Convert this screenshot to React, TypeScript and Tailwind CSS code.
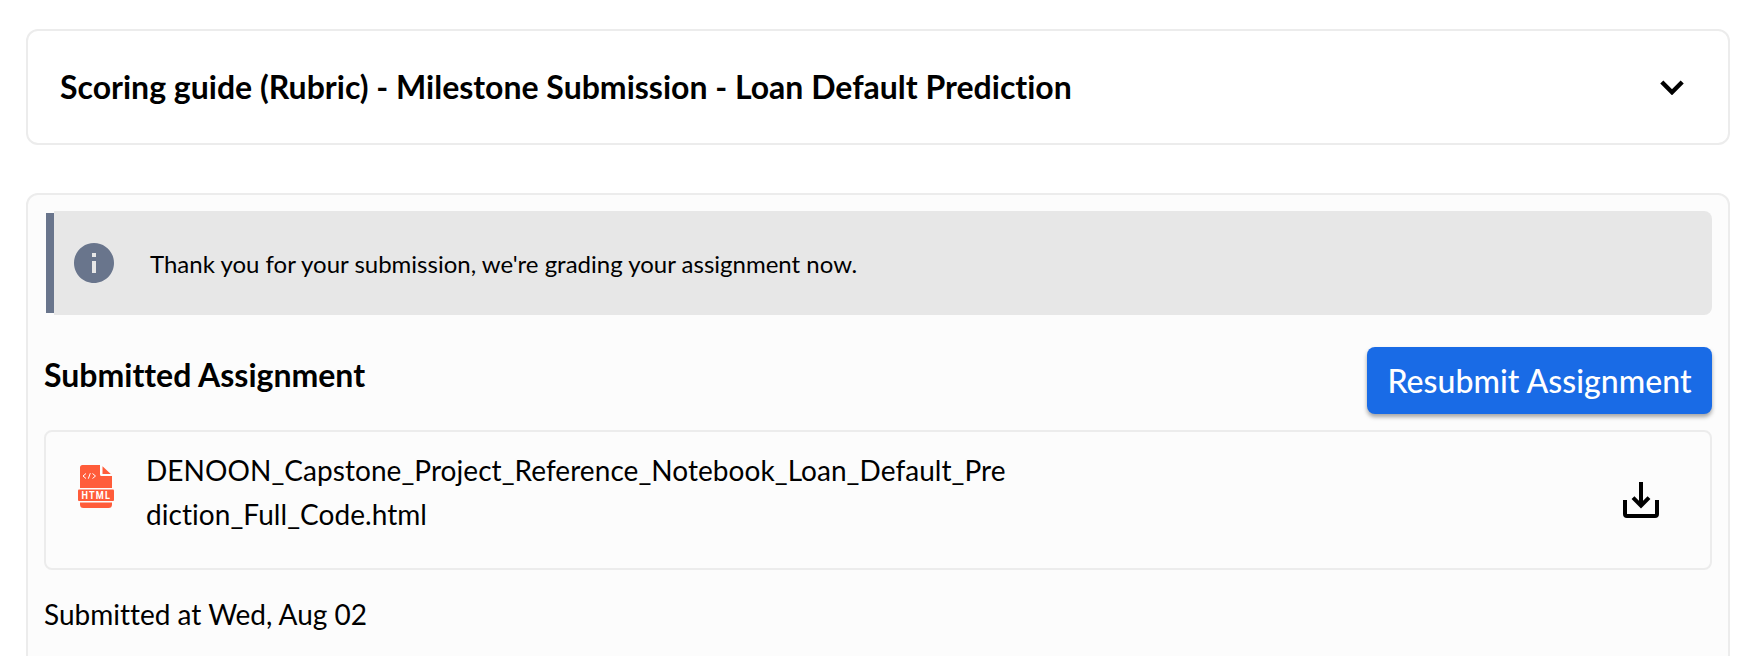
const ChevronDown = () => (
  <svg width="24" height="16" viewBox="0 0 24 16" fill="none">
    <path d="M1.8 3 12 13.2 22.2 3" stroke="#000" strokeWidth="4.4" />
  </svg>
);

const InfoIcon = () => (
  <svg width="48" height="48" viewBox="0 0 24 24" fill="#69758c">
    <path d="M12 2C6.48 2 2 6.48 2 12s4.48 10 10 10 10-4.48 10-10S17.52 2 12 2zm1 15h-2v-6h2v6zm0-8h-2V7h2v2z" />
  </svg>
);

const DownloadIcon = () => (
  <svg width="36" height="36" viewBox="0 0 36 36" fill="none" stroke="#000" strokeWidth="4">
    <path d="M18 0v24" />
    <path d="M10 15.6l8 8 8-8" />
    <path d="M2 18v14a2 2 0 0 0 2 2h28a2 2 0 0 0 2-2V18" />
  </svg>
);

const HtmlFileIcon = () => (
  <svg width="36" height="43" viewBox="0 0 36 43">
    <path d="M4.5 0H22v9.5a1.5 1.5 0 0 0 1.5 1.5H34v12H2V2.5A2.5 2.5 0 0 1 4.5 0z" fill="#ff5c3a" />
    <path d="M24.5 1.3 32.8 9h-8.3z" fill="#ff5c3a" />
    <path d="M2 37.5h32v2a3.5 3.5 0 0 1-3.5 3.5h-25A3.5 3.5 0 0 1 2 39.5z" fill="#ff5c3a" />
    <rect y="24.5" width="36" height="11.5" rx="1" fill="#ff5c3a" />
    <path d="M8 8.5 5 11l3 2.5M14.5 8.5l3 2.5-3 2.5M12.3 8.2l-2 5.5" stroke="#fff" strokeWidth="1" fill="none" />
    <text x="4.4" y="34.4" transform="scale(0.8 1)" letterSpacing="1.5" fontSize="11.4" fontWeight="700" fontFamily="Roboto, sans-serif" fill="#fff">
      HTML
    </text>
  </svg>
);

const RubricCard = () => (
  <section className="flex h-[116px] items-center justify-between rounded-xl border-2 border-[#ececec] bg-white pl-8 pr-11">
    <h2 className="text-[32px] font-bold leading-10">
      Scoring guide (Rubric) - Milestone Submission - Loan Default Prediction
    </h2>
    <button aria-label="Expand">
      <ChevronDown />
    </button>
  </section>
);

const Notice = () => (
  <div className="ml-0.5 flex h-[104px]">
    <div className="my-0.5 w-2 bg-[#69758c]" />
    <div className="flex flex-1 items-center rounded-r-lg bg-[#e7e7e7] pl-4">
      <InfoIcon />
      <p className="pl-8 pt-0.5 text-2xl">Thank you for your submission, we're grading your assignment now.</p>
    </div>
  </div>
);

const FileCard = () => (
  <div className="flex h-[140px] justify-between rounded-lg border-2 border-[#ececec] pl-8 pr-[51px]">
    <div className="flex">
      <div className="pt-[33px]">
        <HtmlFileIcon />
      </div>
      <p className="w-[880px] pl-8 pt-4 text-[28px] leading-[44px] tracking-[0.055px]">
        DENOON_Capstone_Project_Reference_Notebook_Loan_Default_Pre
        <br />
        diction_Full_Code.html
      </p>
    </div>
    <button aria-label="Download" className="self-center">
      <DownloadIcon />
    </button>
  </div>
);

const App = () => {
  return (
    <main className="h-[656px] overflow-hidden bg-white px-[26px] pr-6 pt-[29px] font-['Lato',sans-serif] text-black [font-variant-ligatures:none]">
      <RubricCard />

      <section className="mt-12 h-[520px] rounded-xl border-2 border-[#ececec] bg-[#fcfcfc] p-4">
        <Notice />
        <div className="mt-8 flex h-[67px] justify-between">
          <h3 className="pt-2 text-[32px] font-bold leading-10">Submitted Assignment</h3>
          <button className="h-[67px] w-[345px] rounded-lg bg-[#196be6] text-[32px] font-medium tracking-[0.04px] text-white shadow-[0_3px_4px_rgba(0,0,0,0.35)]">
            Resubmit Assignment
          </button>
        </div>
        <div className="mt-4">
          <FileCard />
        </div>
        <p className="mt-[23px] text-[28px] leading-[42px]">Submitted at Wed, Aug 02</p>
      </section>
    </main>
  );
};

export default App;
